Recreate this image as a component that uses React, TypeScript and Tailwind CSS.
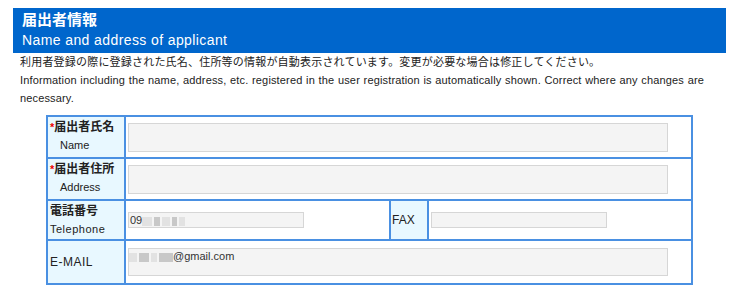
const font = { fontFamily: '"Liberation Sans", "Noto Sans CJK JP", sans-serif' };

function Blur({ w }: { w: number[] }) {
  return (
    <span className="inline-flex items-center gap-[2px] align-middle">
      {w.map((x, i) => (
        <span key={i} className={i % 2 ? 'h-[9px] bg-[#c8c8c8]' : 'h-[9px] bg-[#e2e2e2]'} style={{ width: x }} />
      ))}
    </span>
  );
}

function Label({ jp, en, req }: { jp: string; en: string; req?: boolean }) {
  return (
    <td className="w-[78px] border-2 border-[#4a90e2] bg-[#e8f8ff] px-[2px] py-[1px] align-top text-[12px] leading-[18px] text-[#222]">
      <div className="font-bold">
        {req && <span className="text-[#e00] align-top text-[11px]">*</span>}
        {jp}
      </div>
      <div className={req ? 'pl-[10px] text-[11px]' : 'text-[11px] tracking-[0.5px]'}>{en}</div>
    </td>
  );
}

function Input({ w, h, children }: { w: string; h: string; children?: React.ReactNode }) {
  return (
    <div className={`${w} ${h} border border-[#d6d6d6] bg-[#f4f4f4] text-[11px] leading-[14px] text-[#333]`}>{children}</div>
  );
}

export default function App() {
  return (
    <div className="w-[740px] h-[290px] bg-white pt-2" style={font}>
      <div className="ml-[13px] w-[713px] h-[45px] bg-[#0066cc] pl-[9px] pt-[2px] text-white">
        <div className="text-[15px] leading-[20px] font-bold">届出者情報</div>
        <div className="text-[14px] leading-[20px] tracking-[0.4px]">Name and address of applicant</div>
      </div>
      <div className="pl-[20px] pr-[36px] text-[#222]">
        <p className="text-[11px] leading-[18px] tracking-[0.2px]">利用者登録の際に登録された氏名、住所等の情報が自動表示されています。変更が必要な場合は修正してください。</p>
        <p className="text-[11px] leading-[18px] tracking-[0.15px] text-justify">
          Information including the name, address, etc. registered in the user registration is automatically shown. Correct where any changes are necessary.
        </p>
      </div>
      <table className="ml-[46px] mt-[8px] w-[647px] border-collapse">
        <tbody>
          <tr className="h-[42px]">
            <Label jp="届出者氏名" en="Name" req />
            <td colSpan={3} className="border-2 border-[#4a90e2] px-[2px]">
              <Input w="w-[540px]" h="h-[29px]" />
            </td>
          </tr>
          <tr className="h-[42px]">
            <Label jp="届出者住所" en="Address" req />
            <td colSpan={3} className="border-2 border-[#4a90e2] px-[2px]">
              <Input w="w-[540px]" h="h-[29px]" />
            </td>
          </tr>
          <tr className="h-[40px]">
            <Label jp="電話番号" en="Telephone" />
            <td className="w-[265px] border-2 border-[#4a90e2] px-[2px]">
              <Input w="w-[176px]" h="h-[16px]">
                <span className="pl-[1px]">09</span>
                <Blur w={[10, 6, 8, 5, 6]} />
              </Input>
            </td>
            <td className="w-[38px] border-2 border-[#4a90e2] bg-[#e8f8ff] px-[1px] text-[12px] text-[#222]">FAX</td>
            <td className="border-2 border-[#4a90e2] px-[2px]">
              <Input w="w-[176px]" h="h-[16px]" />
            </td>
          </tr>
          <tr className="h-[44px]">
            <td className="w-[78px] border-2 border-[#4a90e2] bg-[#e8f8ff] px-[2px] text-[12px] tracking-[0.5px] text-[#222]">E-MAIL</td>
            <td colSpan={3} className="border-2 border-[#4a90e2] px-[2px]">
              <Input w="w-[540px]" h="h-[28px]">
                <Blur w={[8, 10, 6, 14]} />
                <span>@gmail.com</span>
              </Input>
            </td>
          </tr>
        </tbody>
      </table>
    </div>
  );
}
